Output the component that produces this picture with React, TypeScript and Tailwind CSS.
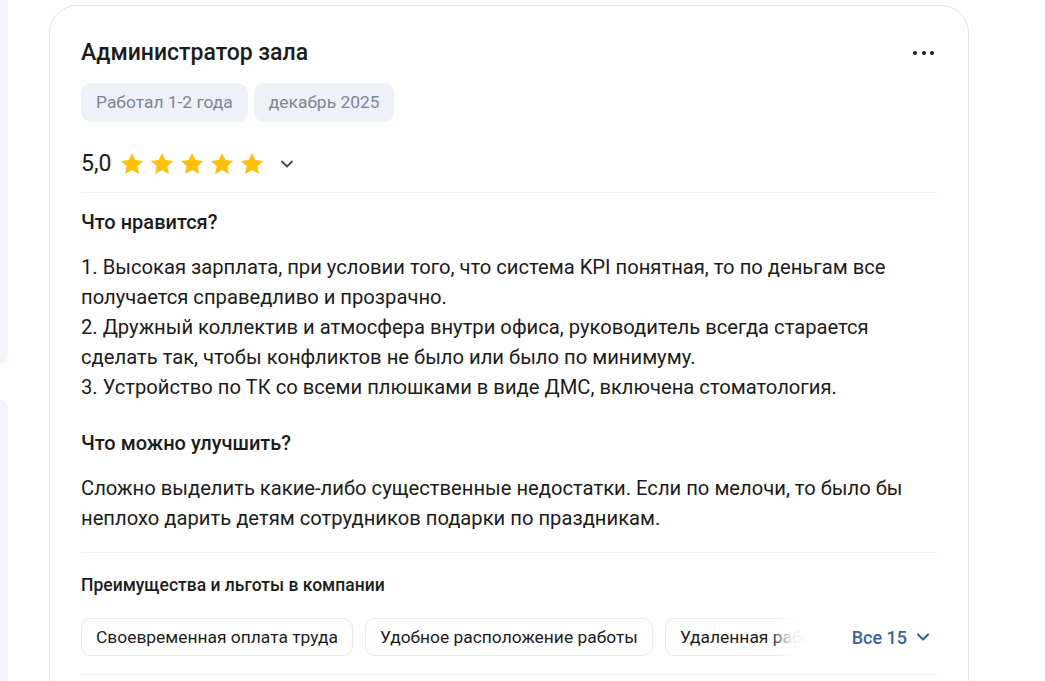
import { ChevronDown } from "lucide-react";

const TAGS = ["Работал 1-2 года", "декабрь 2025"];

const BENEFITS = [
  "Своевременная оплата труда",
  "Удобное расположение работы",
  "Удаленная работа",
];

function Star() {
  return (
    <svg width="26" height="26" viewBox="0 0 24 24" aria-hidden="true">
      <path
        fill="#ffc107"
        d="M12 1.8l3.05 6.6 7.2.8-5.35 4.9 1.5 7.1L12 17.6l-6.4 3.6 1.5-7.1L1.75 9.2l7.2-.8z"
      />
    </svg>
  );
}

export default function App() {
  return (
    <div className="flex h-[681px] overflow-hidden bg-white font-['Roboto',sans-serif] text-[#1c1c1c]">
      {/* Left sidebar edge */}
      <div className="flex w-[8px] shrink-0 flex-col">
        <div className="h-[363px] rounded-br-[16px] bg-[#f3f5fa]" />
        <div className="mt-[37px] flex-1 rounded-tr-[16px] bg-[#f3f5fa]" />
      </div>

      {/* Review card */}
      <article className="ml-[41px] mt-[5px] w-[920px] shrink-0 self-start rounded-[28px] border border-[#dfe3ec] px-[31px] pt-[33px] pb-10">
        <div className="flex items-center justify-between">
          <h2 className="text-[23px] leading-[28px] font-medium">Администратор зала</h2>
          <button aria-label="Ещё" className="mr-[3px] flex gap-[4.5px]">
            <span className="h-[4px] w-[4px] rounded-full bg-[#1c1c1c]" />
            <span className="h-[4px] w-[4px] rounded-full bg-[#1c1c1c]" />
            <span className="h-[4px] w-[4px] rounded-full bg-[#1c1c1c]" />
          </button>
        </div>

        <div className="mt-4 flex gap-[6px]">
          {TAGS.map((tag) => (
            <span
              key={tag}
              className="flex h-[39px] items-center rounded-[10px] bg-[#eef1f7] px-[15px] text-[17.4px] text-[#7b8699]"
            >
              {tag}
            </span>
          ))}
        </div>

        <div className="mt-[28px] flex items-center">
          <span className="text-[23px] leading-[28px]">5,0</span>
          <div className="ml-[8px] flex gap-[4px]">
            {[0, 1, 2, 3, 4].map((i) => (
              <Star key={i} />
            ))}
          </div>
          <ChevronDown className="ml-[12px] text-[#4a4a4a]" size={20} strokeWidth={2.2} />
        </div>

        <div className="mt-[14px] h-px bg-[#eef0f5]" />

        <h3 className="mt-[17px] text-[20px] leading-[24px] font-medium">Что нравится?</h3>
        <p className="mt-[18px] text-[20.2px] leading-[30px]">
          1. Высокая зарплата, при условии того, что система KPI понятная, то по деньгам все
          <br />
          получается справедливо и прозрачно.
          <br />
          2. Дружный коллектив и атмосфера внутри офиса, руководитель всегда старается
          <br />
          сделать так, чтобы конфликтов не было или было по минимуму.
          <br />
          3. Устройство по ТК со всеми плюшками в виде ДМС, включена стоматология.
        </p>

        <h3 className="mt-[29px] text-[20px] leading-[24px] font-medium">Что можно улучшить?</h3>
        <p className="mt-[18px] text-[20.2px] leading-[30px]">
          Сложно выделить какие-либо существенные недостатки. Если по мелочи, то было бы
          <br />
          неплохо дарить детям сотрудников подарки по праздникам.
        </p>

        <div className="mt-[19px] h-px bg-[#eef0f5]" />

        <h4 className="mt-[21px] text-[17.5px] leading-[22px] font-medium">
          Преимущества и льготы в компании
        </h4>

        <div className="mt-[22px] flex items-center">
          <div className="relative flex w-[730px] gap-3 overflow-hidden">
            {BENEFITS.map((b) => (
              <span
                key={b}
                className="flex h-[38px] shrink-0 items-center rounded-[10px] border border-[#e6e9f1] px-[14px] text-[17.4px] whitespace-nowrap"
              >
                {b}
              </span>
            ))}
            <div className="pointer-events-none absolute top-0 right-0 h-full w-[40px] bg-gradient-to-r from-white/0 via-white/90 to-white" />
          </div>
          <button className="ml-auto mr-[4px] flex items-center gap-[6px] text-[18px] font-medium text-[#3a62a3]">
            Все 15
            <ChevronDown size={20} strokeWidth={2.6} />
          </button>
        </div>

        <div className="mt-[18px] h-px bg-[#eef0f5]" />
      </article>
    </div>
  );
}
